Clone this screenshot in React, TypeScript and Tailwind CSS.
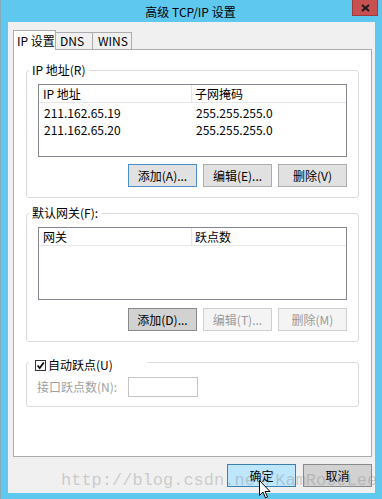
import React from "react";

const font = "font-['Noto_Sans_CJK_SC','Noto_Sans',sans-serif]";

type BtnKind = "normal" | "focus" | "pressed" | "disabled" | "hot";

const btnStyles: Record<BtnKind, string> = {
  normal: "bg-[#e1e1e1] border-[#adadad] text-black",
  focus: "bg-[#e1e1e1] border-[#4a8fc9] text-black",
  pressed: "bg-[#d2d2d2] border-[#8a8a8a] text-black",
  disabled: "bg-[#f4f4f4] border-[#cfcfcf] text-[#9a9a9a]",
  hot: "bg-[#bee6fd] border-[#3c7fb1] text-black",
};

const Btn = ({ label, kind = "normal" }: { label: string; kind?: BtnKind }) => (
  <div
    className={`flex h-[23px] w-[69px] items-center justify-center border text-[12px] leading-none ${btnStyles[kind]}`}
  >
    {label}
  </div>
);

const ListBox = ({
  cols,
  rows,
}: {
  cols: [string, string];
  rows: [string, string][];
}) => (
  <div className="h-[73px] border border-[#828790] bg-white text-[12px]">
    <div className="flex h-[18px] items-center border-b border-[#e5e5e5] leading-none">
      <div className="flex h-full w-[153px] items-center border-r border-[#e5e5e5] pl-[4px]">
        {cols[0]}
      </div>
      <div className="pl-[3px]">{cols[1]}</div>
    </div>
    <div className="pt-[1px]">
      {rows.map((r, i) => (
        <div key={i} className="flex h-[17px] items-center leading-none">
          <div className="w-[153px] pl-[5px]">{r[0]}</div>
          <div className="pl-[4px]">{r[1]}</div>
        </div>
      ))}
    </div>
  </div>
);

const App = () => {
  return (
    <div
      className={`relative flex h-[499px] w-[382px] flex-col overflow-hidden border-l border-[#86a9b8] bg-[#5fc8ee] ${font} text-black`}
    >
      {/* title bar */}
      <div className="relative flex h-[22px] items-center justify-center text-[12px] leading-none">
        <span className="-ml-[2px] pt-[1px]">高级 TCP/IP 设置</span>
        <div className="absolute right-[4px] top-0 flex h-[16px] w-[26px] items-center justify-center border border-t-0 border-[#9e3b3b] bg-[#c75050]">
          <svg width="9" height="8" viewBox="0 0 9 8">
            <path d="M1 1 L8 7 M8 1 L1 7" stroke="#1b1b1b" strokeWidth="2" />
          </svg>
        </div>
      </div>

      {/* body */}
      <div className="mb-[6px] ml-[7px] mr-[7px] flex flex-1 flex-col bg-[#f0f0f0] pl-[5px] pr-[3px] pt-[8px]">
        {/* tabs */}
        <div className="flex items-end whitespace-nowrap text-[12px] leading-none">
          <div className="relative z-10 -mb-px flex h-[20px] w-[43px] items-start border border-b-0 border-[#acacac] bg-white pl-[3px] pt-[4px]">
            IP 设置
          </div>
          <div className="flex h-[17px] w-[37px] items-center border-r border-t border-[#acacac] bg-[#f0f0f0] pl-[4px]">
            DNS
          </div>
          <div className="flex h-[17px] w-[39px] items-center border-r border-t border-[#acacac] bg-[#f0f0f0] pl-[5px]">
            WINS
          </div>
        </div>

        {/* tab panel */}
        <div className="flex h-[408px] flex-col border border-[#acacac] bg-white px-[12px] pt-[12px] text-[12px]">
          <fieldset className="rounded-[3px] border border-[#dcdcdc]">
            <legend className="ml-[2px] px-[3px] leading-[16px]">IP 地址(R)</legend>
            <div className="px-[11px] pb-[10px] pt-[6px]">
              <ListBox
                cols={["IP 地址", "子网掩码"]}
                rows={[
                  ["211.162.65.19", "255.255.255.0"],
                  ["211.162.65.20", "255.255.255.0"],
                ]}
              />
              <div className="mt-[7px] flex justify-end gap-[6px]">
                <Btn label="添加(A)..." kind="focus" />
                <Btn label="编辑(E)..." />
                <Btn label="删除(V)" />
              </div>
            </div>
          </fieldset>

          <fieldset className="mt-[7px] rounded-[3px] border border-[#dcdcdc]">
            <legend className="ml-[2px] px-[3px] leading-[16px]">默认网关(F):</legend>
            <div className="px-[11px] pb-[10px] pt-[6px]">
              <ListBox cols={["网关", "跃点数"]} rows={[]} />
              <div className="mt-[8px] flex justify-end gap-[6px]">
                <Btn label="添加(D)..." kind="pressed" />
                <Btn label="编辑(T)..." kind="disabled" />
                <Btn label="删除(M)" kind="disabled" />
              </div>
            </div>
          </fieldset>

          <fieldset className="mt-[12px] rounded-[3px] border border-[#dcdcdc]">
            <legend className="ml-[2px] w-[118px] pl-[6px] leading-[16px]">
              <span className="flex translate-y-[3px] items-center gap-[2px]">
                <span className="flex h-[11px] w-[11px] items-center justify-center border border-[#333] bg-white">
                  <svg width="9" height="9" viewBox="0 0 9 9">
                    <path d="M1.5 4.5 L3.7 7 L7.8 1.5" stroke="#111" strokeWidth="1.8" fill="none" />
                  </svg>
                </span>
                自动跃点(U)
              </span>
            </legend>
            <div className="flex items-center pb-[9px] pl-[10px] pt-[7px]">
              <span className="w-[91px] text-[#a0a0a0]">接口跃点数(N):</span>
              <div className="h-[20px] w-[70px] border border-[#c4c4c4] bg-white" />
            </div>
          </fieldset>
        </div>

        {/* footer */}
        <div className="mt-[7px] flex justify-end gap-[7px]">
          <Btn label="确定" kind="hot" />
          <Btn label="取消" kind="pressed" />
        </div>
      </div>

      {/* watermark */}
      <div className="pointer-events-none absolute left-[60px] top-[472px] font-['Liberation_Mono',monospace] text-[17px] leading-[17px] text-[rgba(130,130,130,0.35)]">
        http://blog.csdn.net/KamRoseLee
      </div>

      {/* mouse pointer */}
      <svg
        className="pointer-events-none absolute left-[258px] top-[480px]"
        width="12"
        height="19"
        viewBox="0 0 12 19"
      >
        <path
          d="M0.5 0.5 L0.5 15.5 L4 12 L6.5 18 L8.5 17 L6 11.5 L11 11.5 Z"
          fill="white"
          stroke="black"
          strokeWidth="1"
        />
      </svg>
    </div>
  );
};

export default App;
